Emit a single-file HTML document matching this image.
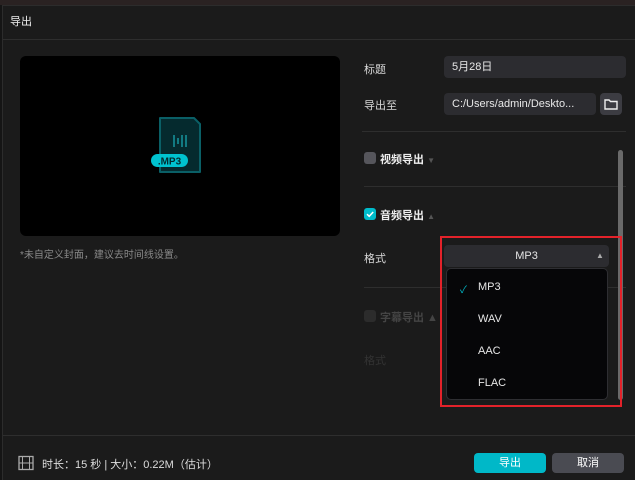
<!DOCTYPE html>
<html><head><meta charset="utf-8"><style>
*{margin:0;padding:0;box-sizing:border-box}
body{width:635px;height:480px;overflow:hidden;background:#151515;font-family:"Liberation Sans","Noto Sans CJK SC",sans-serif;font-size:11px;color:#e6e6e6;position:relative}
.a{position:absolute}
.dlg{left:2px;top:5px;width:633px;height:475px;background:#1b1b1b;border-left:1px solid #2c2c2c;border-top:1px solid #2c2c2c}
.hr{height:1px;background:#2e2e2e}
.inp{background:#2c2c30;border-radius:4px;height:22px;line-height:22px;padding-left:8px;color:#e8e8e8}
.lbl{color:#d8d8d8}
.bold{font-weight:bold;color:#eee}
</style></head><body>
<div class="a" style="left:0;top:0;width:635px;height:5px;background:#2a2222"></div>
<div class="a dlg"></div>
<div class="a" style="left:10px;top:13px;font-size:11px;color:#eee">导出</div>
<div class="a hr" style="left:3px;top:39px;width:632px"></div>

<div class="a" style="left:20px;top:56px;width:320px;height:180px;background:#000;border-radius:6px"></div>
<svg class="a" style="left:150px;top:115px" width="60" height="60" viewBox="0 0 60 60">
<path d="M10 3 H44 L50 9 V57 H10 Z" fill="#052a2e" stroke="#0a5f66" stroke-width="2" stroke-linejoin="round"/>
<g stroke="#127a82" stroke-width="2"><line x1="24" y1="20" x2="24" y2="32"/><line x1="28" y1="23" x2="28" y2="29"/><line x1="32" y1="20" x2="32" y2="32"/><line x1="36" y1="20" x2="36" y2="32"/></g>
<rect x="1" y="39" width="37" height="13" rx="6.5" fill="#00c2cf"/>
<text x="19.5" y="49.5" text-anchor="middle" font-family="Liberation Sans" font-weight="bold" font-size="10" fill="#032a2e">.MP3</text>
</svg>
<div class="a" style="left:20px;top:246px;color:#8a8a8a;font-size:10px">*未自定义封面，建议去时间线设置。</div>

<div class="a lbl" style="left:364px;top:61px">标题</div>
<div class="a inp" style="left:444px;top:56px;width:182px">5月28日</div>
<div class="a lbl" style="left:364px;top:97px">导出至</div>
<div class="a inp" style="left:444px;top:93px;width:152px">C:/Users/admin/Deskto...</div>
<div class="a" style="left:600px;top:93px;width:22px;height:22px;background:#3c3c42;border-radius:4px"></div>
<svg class="a" style="left:603px;top:96px" width="16" height="16" viewBox="0 0 16 16"><path d="M2 4 H6 L7.5 5.5 H14 V13 H2 Z" fill="none" stroke="#eee" stroke-width="1.4"/></svg>
<div class="a hr" style="left:362px;top:131px;width:264px"></div>

<div class="a" style="left:364px;top:152px;width:12px;height:12px;border-radius:3px;background:#56565c"></div>
<div class="a bold" style="left:380px;top:151px">视频导出 <span style="color:#555;font-size:8px">▼</span></div>
<div class="a hr" style="left:364px;top:186px;width:262px"></div>
<div class="a" style="left:364px;top:208px;width:12px;height:12px;border-radius:3px;background:#00bccb"></div>
<svg class="a" style="left:364px;top:208px" width="12" height="12"><path d="M3 6.2 L5.2 8.3 L9.2 4" fill="none" stroke="#fff" stroke-width="1.5"/></svg>
<div class="a bold" style="left:380px;top:207px">音频导出 <span style="color:#555;font-size:8px">▲</span></div>

<div class="a lbl" style="left:364px;top:250px">格式</div>
<div class="a" style="left:444px;top:245px;width:165px;height:22px;background:#2c2c30;border-radius:4px;text-align:center;line-height:22px">MP3</div>
<div class="a" style="left:596px;top:251px;color:#aaa;font-size:8px">▲</div>
<div class="a hr" style="left:364px;top:287px;width:262px"></div>
<div class="a" style="left:364px;top:310px;width:12px;height:12px;border-radius:3px;background:#2c2c2c"></div>
<div class="a" style="left:380px;top:309px;color:#444;font-weight:bold">字幕导出 ▲</div>
<div class="a" style="left:364px;top:352px;color:#333">格式</div>
<div class="a" style="left:618px;top:150px;width:5px;height:250px;background:#6a6a6a;border-radius:3px"></div>

<div class="a" style="left:446px;top:268px;width:162px;height:132px;background:#060608;border:1px solid #2e2e32;border-radius:5px"></div>
<div class="a" style="left:460px;top:281px;color:#00bccb;font-size:10px">✓</div>
<div class="a" style="left:478px;top:281px">MP3</div>
<div class="a" style="left:478px;top:313px">WAV</div>
<div class="a" style="left:478px;top:345px">AAC</div>
<div class="a" style="left:478px;top:377px">FLAC</div>
<div class="a" style="left:440px;top:236px;width:182px;height:171px;border:2.5px solid #e3222a"></div>

<div class="a hr" style="left:3px;top:435px;width:632px"></div>
<svg class="a" style="left:18px;top:455px" width="16" height="16" viewBox="0 0 16 16"><rect x="1" y="1.5" width="14" height="13" fill="none" stroke="#aaa" stroke-width="1.3"/><line x1="4.5" y1="1.5" x2="4.5" y2="14.5" stroke="#aaa"/><line x1="11.5" y1="1.5" x2="11.5" y2="14.5" stroke="#aaa"/><line x1="1" y1="8" x2="15" y2="8" stroke="#aaa"/></svg>
<div class="a" style="left:42px;top:456px;color:#ddd">时长：15 秒 | 大小：0.22M（估计）</div>
<div class="a" style="left:474px;top:453px;width:72px;height:20px;background:#00b8c8;border-radius:4px;text-align:center;line-height:20px;color:#fff">导出</div>
<div class="a" style="left:552px;top:453px;width:72px;height:20px;background:#4a4b52;border-radius:4px;text-align:center;line-height:20px;color:#fff">取消</div>
</body></html>
